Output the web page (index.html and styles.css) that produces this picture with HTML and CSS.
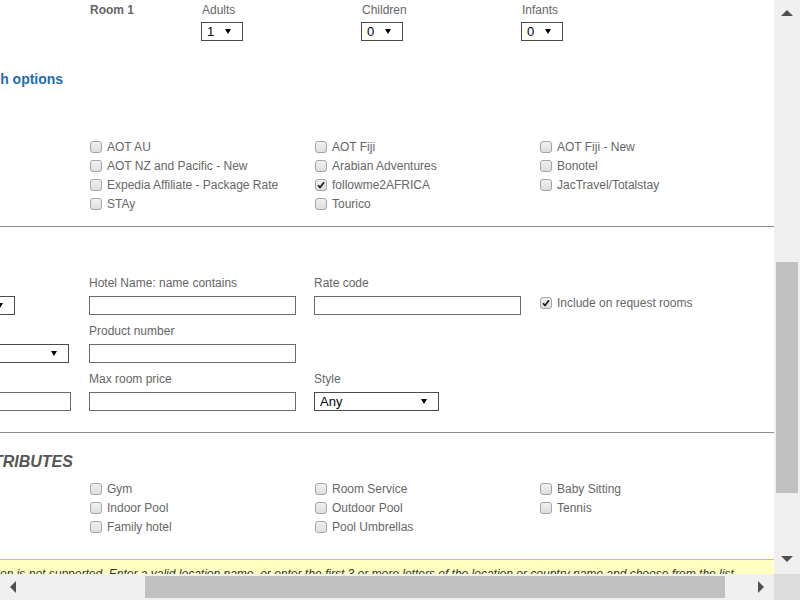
FILE: index.html
```html
<!DOCTYPE html>
<html lang="en">
<head>
	<meta charset="UTF-8">
	<title>Hotel search</title>
	<link rel="stylesheet" href="styles.css">
</head>
<body>
	<div class="window">
		<div class="view">
			<div class="page">
				<div class="rooms">
					<div class="room-name">Room 1</div>
					<div class="guest">
						<div class="lbl">Adults</div>
						<span class="sel sel-sm"><span>1</span><svg class="caret" width="6" height="5" viewBox="0 0 6 5"><path d="M0 0H6L3 5Z"/></svg></span>
					</div>
					<div class="guest">
						<div class="lbl">Children</div>
						<span class="sel sel-sm"><span>0</span><svg class="caret" width="6" height="5" viewBox="0 0 6 5"><path d="M0 0H6L3 5Z"/></svg></span>
					</div>
					<div class="guest">
						<div class="lbl">Infants</div>
						<span class="sel sel-sm"><span>0</span><svg class="caret" width="6" height="5" viewBox="0 0 6 5"><path d="M0 0H6L3 5Z"/></svg></span>
					</div>
				</div>

				<h2 class="opt-title">Search options</h2>

				<div class="checks suppliers">
					<label class="chk"><span class="cb"></span>AOT AU</label>
					<label class="chk"><span class="cb"></span>AOT Fiji</label>
					<label class="chk"><span class="cb"></span>AOT Fiji - New</label>
					<label class="chk"><span class="cb"></span>AOT NZ and Pacific - New</label>
					<label class="chk"><span class="cb"></span>Arabian Adventures</label>
					<label class="chk"><span class="cb"></span>Bonotel</label>
					<label class="chk"><span class="cb"></span>Expedia Affiliate - Package Rate</label>
					<label class="chk"><span class="cb on"><svg width="10" height="10" viewBox="0 0 10 10"><path d="M2 5.2L4 7.4L8 2.2"/></svg></span>followme2AFRICA</label>
					<label class="chk"><span class="cb"></span>JacTravel/Totalstay</label>
					<label class="chk"><span class="cb"></span>STAy</label>
					<label class="chk"><span class="cb"></span>Tourico</label>
				</div>

				<hr class="rule rule-top">

				<div class="form">
					<div class="field">
						<div class="lbl">&nbsp;</div>
						<span class="sel sel-a1"><span></span><svg class="caret" width="6" height="5" viewBox="0 0 6 5"><path d="M0 0H6L3 5Z"/></svg></span>
					</div>
					<div class="field">
						<div class="lbl">Hotel Name: name contains</div>
						<input class="txt" type="text">
					</div>
					<div class="field">
						<div class="lbl">Rate code</div>
						<input class="txt" type="text">
					</div>
					<div class="field field-chk">
						<label class="chk"><span class="cb on"><svg width="10" height="10" viewBox="0 0 10 10"><path d="M2 5.2L4 7.4L8 2.2"/></svg></span>Include on request rooms</label>
					</div>

					<div class="field">
						<div class="lbl">&nbsp;</div>
						<span class="sel sel-a2"><span></span><svg class="caret" width="6" height="5" viewBox="0 0 6 5"><path d="M0 0H6L3 5Z"/></svg></span>
					</div>
					<div class="field">
						<div class="lbl">Product number</div>
						<input class="txt" type="text">
					</div>
					<div class="field"></div>
					<div class="field"></div>

					<div class="field">
						<div class="lbl">&nbsp;</div>
						<input class="txt" type="text">
					</div>
					<div class="field">
						<div class="lbl">Max room price</div>
						<input class="txt" type="text">
					</div>
					<div class="field">
						<div class="lbl">Style</div>
						<span class="sel sel-style"><span>Any</span><svg class="caret" width="6" height="5" viewBox="0 0 6 5"><path d="M0 0H6L3 5Z"/></svg></span>
					</div>
					<div class="field"></div>
				</div>

				<hr class="rule rule-bottom">

				<h2 class="attr-title">HOTEL ATTRIBUTES</h2>

				<div class="checks attrs">
					<label class="chk"><span class="cb"></span>Gym</label>
					<label class="chk"><span class="cb"></span>Room Service</label>
					<label class="chk"><span class="cb"></span>Baby Sitting</label>
					<label class="chk"><span class="cb"></span>Indoor Pool</label>
					<label class="chk"><span class="cb"></span>Outdoor Pool</label>
					<label class="chk"><span class="cb"></span>Tennis</label>
					<label class="chk"><span class="cb"></span>Family hotel</label>
					<label class="chk"><span class="cb"></span>Pool Umbrellas</label>
				</div>

				<div class="msg">Location is not supported. Enter a valid location name, or enter the first 3 or more letters of the location or country name and choose from the list.</div>
			</div>
		</div>

		<div class="vbar">
			<svg class="arr-up" width="12" height="6" viewBox="0 0 12 6"><path d="M0 6L6 0L12 6Z"/></svg>
			<div class="vthumb"></div>
			<svg class="arr-down" width="12" height="6" viewBox="0 0 12 6"><path d="M0 0H12L6 6Z"/></svg>
		</div>
		<div class="hbar">
			<svg class="arr-left" width="6" height="12" viewBox="0 0 6 12"><path d="M6 0V12L0 6Z"/></svg>
			<div class="hthumb"></div>
			<svg class="arr-right" width="6" height="12" viewBox="0 0 6 12"><path d="M0 0L6 6L0 12Z"/></svg>
		</div>
		<div class="corner"></div>
	</div>
</body>
</html>
```

FILE: styles.css
```css
body{margin:0;font:12px/14px "Liberation Sans",Arial,sans-serif;color:#666;background:#fff}
h2{margin:0}
.window{display:grid;grid-template-columns:774px 26px;grid-template-rows:574px 26px;width:800px;height:600px;overflow:hidden}
.view{overflow:hidden;background:#fff}
.page{margin-left:-150px;width:1200px}

/* rooms */
.rooms{display:flex;padding:3px 0 0 240px}
.room-name{width:111px;font-weight:bold;line-height:14px}
.guest{width:160px}
.guest .lbl{padding-left:1px}
.lbl{line-height:14px;height:14px;white-space:nowrap}
.sel{display:flex;align-items:center;justify-content:space-between;box-sizing:border-box;height:19px;border:1px solid #4a4a4a;background:#fff;padding:0 11px 0 5px;font-size:13px;color:#000;line-height:17px}
.sel-sm{width:42px;margin-top:5px}
.caret{fill:#000;display:block}
.sel-a1{width:151px;margin-top:6px}
.sel-a2{width:205px;margin-top:6px}
.sel-style{width:125px;margin-top:6px}

.opt-title{font-size:14px;line-height:16px;color:#1f6db5;margin:30px 0 0 112px;font-weight:bold}

/* checkbox lists */
.checks{display:grid;grid-template-columns:repeat(3,225px);margin-left:239px}
.suppliers{margin-top:50px}
.chk{display:flex;align-items:center;height:19px;white-space:nowrap;color:#666}
.cb{display:flex;align-items:center;justify-content:center;box-sizing:border-box;width:12px;height:12px;margin:0 5px 0 1px;border:1px solid #a4a4a4;border-radius:3px;background:linear-gradient(#f0f0f0,#dedede)}
.cb svg path{fill:none;stroke:#1a1a1a;stroke-width:1.7}

.rule{margin:0;border:0;border-top:1px solid #8c8c8c;height:0}
.rule-top{margin-top:13px}
.rule-bottom{margin-top:21px}

/* form */
.form{display:grid;grid-template-columns:repeat(4,225px);row-gap:9px;margin:49px 0 0 14px}
.txt{display:block;box-sizing:border-box;width:207px;height:19px;margin:6px 0 0;border:1px solid #6b6b6b;padding:0 3px;font:13px "Liberation Sans",Arial,sans-serif;background:#fff}
.field-chk{padding-top:17px}

.attr-title{font-size:16px;line-height:18px;font-style:italic;font-weight:bold;color:#555;margin:20px 0 0 65px}
.attrs{margin-top:8px}

.msg{margin-top:23px;border-top:1px solid #f2c521;background:#ffffc2;padding:6px 0 10px 118px;font-style:italic;color:#333;line-height:16px;white-space:nowrap}

/* scrollbars */
.vbar{display:flex;flex-direction:column;align-items:center;background:#f0f0f0}
.vbar svg,.hbar svg{display:block;fill:#505050;flex:none}
.arr-up{margin-top:10px}
.vthumb{width:22px;height:231px;margin-top:246px;background:#c1c1c1}
.arr-down{margin:auto 0 12px}
.hbar{display:flex;align-items:center;background:#f0f0f0}
.arr-left{margin-left:10px}
.hthumb{width:580px;height:22px;margin-left:129px;background:#c1c1c1}
.arr-right{margin-left:33px}
.corner{background:#dcdcdc}
```
